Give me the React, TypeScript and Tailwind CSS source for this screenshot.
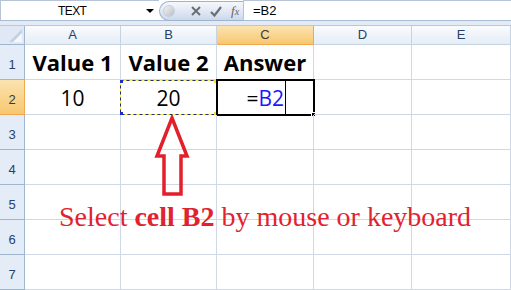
import React from "react";

const cols = ["A", "B", "C", "D", "E"];
const widths = ["w-[96px]", "w-[96px]", "w-[97px]", "w-[98px]", "w-[99px]"];
const rows = [1, 2, 3, 4, 5, 6, 7];

const cellFont = { fontFamily: '"Open Sans", "Noto Sans", sans-serif' };

function Cell({ r, c }: { r: number; c: number }) {
  const base = `relative h-[35px] ${widths[c]} border-r border-b border-[#d0d7e5] shrink-0`;
  if (r === 1) {
    const label = ["Value 1", "Value 2", "Answer", "", ""][c];
    return (
      <div className={`${base} flex items-center justify-center pt-[1px] text-[22px] font-bold text-black`} style={cellFont}>
        {label}
      </div>
    );
  }
  if (r === 2 && c === 0) {
    return (
      <div className={`${base} flex items-center justify-center pt-[3px] text-[21px] text-black`} style={cellFont}>
        10
      </div>
    );
  }
  if (r === 2 && c === 1) {
    return (
      <div className={`${base} flex items-center justify-center pt-[3px] text-[21px] text-black`} style={cellFont}>
        20
        {/* copy marquee */}
        <svg className="absolute left-[-1px] top-0 w-[97px] h-[35px]" viewBox="0 0 97 35">
          <rect x="0.5" y="0.5" width="96" height="34" fill="none" stroke="#f7f35a" strokeWidth="1" />
          <rect x="0.5" y="0.5" width="96" height="34" fill="none" stroke="#1b2b7a" strokeWidth="1" strokeDasharray="3 3" />
          <rect x="0" y="0" width="3" height="3" fill="#1b2bcc" />
          <rect x="0" y="32" width="3" height="3" fill="#1b2bcc" />
          <rect x="94" y="0" width="3" height="3" fill="#f3e03a" />
          <rect x="94" y="32" width="3" height="3" fill="#f3e03a" />
        </svg>
      </div>
    );
  }
  if (r === 2 && c === 2) {
    return (
      <div className={`${base} flex items-center justify-end pr-[27px] pt-[3px] text-[21px]`} style={cellFont}>
        <span className="text-black">=</span>
        <span className="text-[#1a1aff]">B2</span>
        <span className="ml-[1px] w-[1px] h-[33px] bg-black self-start -mt-[2px]" />
        <div className="absolute left-[-1px] top-[-1px] w-[99px] h-[37px] border-2 border-black pointer-events-none" />
        <div className="absolute right-[-3px] bottom-[-3px] w-[5px] h-[5px] bg-black border border-white" />
      </div>
    );
  }
  return <div className={base} />;
}

export default function App() {
  return (
    <div className="relative w-[511px] h-[290px] overflow-hidden bg-white select-none">
      {/* Formula bar */}
      <div className="flex h-[21px] border-b border-[#a9bcd6] bg-white" style={{ fontFamily: '"Liberation Sans", Arial, sans-serif' }}>
        <div className="relative w-[159px] flex items-center border-t border-l border-[#b7c4d6]">
          <span className="ml-[57px] text-[12px] tracking-[-0.6px] text-black">TEXT</span>
          <span className="absolute left-[145px] top-[8px] w-0 h-0 border-l-[4px] border-r-[4px] border-t-[4px] border-l-transparent border-r-transparent border-t-black" />
        </div>
        <div className="relative w-[84px] h-[20px] mt-[1px] rounded-l-full border border-r-0 border-[#9fb3cf] bg-gradient-to-b from-[#f5f8fc] via-[#e1e9f4] to-[#cbd9ec] flex items-center">
          <span className="ml-[3px] w-[12px] h-[12px] rounded-full bg-gradient-to-br from-[#f4f4f4] to-[#b9bec6] border border-[#c9ced6]" />
          <svg className="ml-[16px]" width="10" height="10" viewBox="0 0 10 10">
            <path d="M1 1 L9 9 M9 1 L1 9" stroke="#6b6f75" strokeWidth="2" />
          </svg>
          <svg className="ml-[9px]" width="12" height="11" viewBox="0 0 12 11">
            <path d="M1 6 L4.5 9.5 L11 1" stroke="#6b6f75" strokeWidth="2.2" fill="none" />
          </svg>
          <span className="ml-[9px] text-[13px] italic text-[#5f646b]" style={{ fontFamily: '"Liberation Serif", serif' }}>
            f<span className="text-[10px]">x</span>
          </span>
        </div>
        <div className="flex-1 flex items-center pl-[9px] border-l border-t border-[#b7c4d6] text-[13px] text-black">=B2</div>
      </div>
      <div className="h-[5px] bg-[#e3eaf3] border-b border-[#b9c9dd]" />

      {/* Column headers */}
      <div className="flex h-[19px]" style={{ fontFamily: '"Liberation Sans", Arial, sans-serif' }}>
        <div className="relative w-[25px] shrink-0 bg-[#dfe8f4] border-r border-b border-[#9eb6ce]">
          <svg className="absolute left-[9px] top-[3px]" width="13" height="13" viewBox="0 0 13 13">
            <polygon points="13,0 13,13 0,13" fill="#c3d1e3" />
            <polygon points="13,4 13,13 4,13" fill="#f6f8fb" />
          </svg>
        </div>
        {cols.map((c, i) =>
          i === 2 ? (
            <div key={c} className={`${widths[i]} shrink-0 flex items-center justify-center text-[13px] text-[#3c3a32] border-r border-b border-[#f2a84f] bg-gradient-to-b from-[#fbe3b0] to-[#f7c76e]`}>
              {c}
            </div>
          ) : (
            <div key={c} className={`${widths[i]} shrink-0 flex items-center justify-center text-[13px] text-[#27416a] border-r border-b border-[#c5d3e3] bg-gradient-to-b from-[#f9fbfd] to-[#e6edf6]`}>
              {c}
            </div>
          )
        )}
      </div>

      {/* Rows */}
      {rows.map((r) => (
        <div key={r} className="flex">
          <div
            className={`w-[25px] h-[35px] shrink-0 flex items-center justify-center pt-[6px] text-[13px] border-r border-b ${
              r === 2
                ? "bg-gradient-to-b from-[#fbe3b0] to-[#f7c76e] text-[#3c3a32] border-[#f2a84f]"
                : "bg-[#e4ecf7] text-[#27416a] border-[#9eb6ce]"
            }`}
            style={{ fontFamily: '"Liberation Sans", Arial, sans-serif' }}
          >
            {r}
          </div>
          {cols.map((_, c) => (
            <Cell key={c} r={r} c={c} />
          ))}
        </div>
      ))}

      {/* Annotation arrow */}
      <svg className="absolute left-[154px] top-[115px]" width="36" height="83" viewBox="0 0 36 83">
        <polygon points="18,3 33,41 27,41 27,79 10,79 10,41 3,41" fill="none" stroke="#e3202a" strokeWidth="3.5" strokeLinejoin="miter" />
      </svg>

      {/* Annotation text */}
      <div
        className="absolute left-[59px] top-[203px] text-[28px] leading-none text-[#e0232d] whitespace-nowrap"
        style={{ fontFamily: '"Liberation Serif", "Times New Roman", serif' }}
      >
        Select <span className="font-bold">cell B2</span> by mouse or keyboard
      </div>
    </div>
  );
}
